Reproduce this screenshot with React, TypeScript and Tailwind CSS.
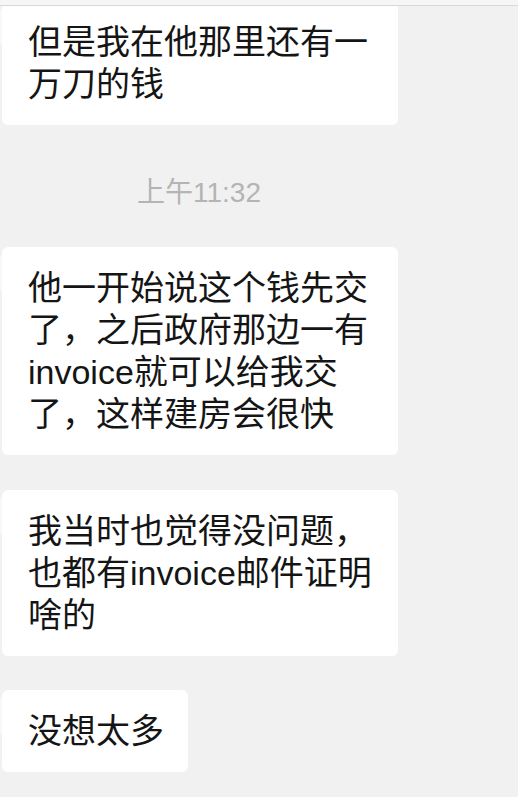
const font = { fontFamily: '"Liberation Sans", "Noto Sans CJK SC", sans-serif' }

type Message = { id: number; text: string }

const Bubble = ({ text, className }: { text: string; className: string }) => {
  return (
    <div className={`relative ml-[2px] w-fit max-w-[396px] rounded-[6px] bg-white pt-[20px] pb-[20px] pl-[26px] pr-[24px] ${className}`}>
      <div className="absolute -left-[2px] top-[8px] h-[36px] w-[2px] rounded-l-sm bg-[#f8f8f8]" />
      <p className="text-[34px] leading-[42px] text-[#151515]" style={font}>
        {text}
      </p>
    </div>
  )
}

export default function App() {
  const messages: Message[] = [
    { id: 2, text: '他一开始说这个钱先交了，之后政府那边一有invoice就可以给我交了，这样建房会很快' },
    { id: 3, text: '我当时也觉得没问题，也都有invoice邮件证明啥的' },
    { id: 4, text: '没想太多' },
  ]

  return (
    <div className="relative h-[797px] w-[518px] overflow-hidden bg-[#f1f1f1]">
      {/* top bar edge */}
      <div className="absolute inset-x-0 top-0 z-10 h-[6px] border-b border-[#d9d9d9] bg-[#f6f6f6]" />

      <div className="flex flex-col pt-[1px]">
        <Bubble text="但是我在他那里还有一万刀的钱" className="" />

        <div
          className="mt-[50px] pl-[137px] text-[28px] leading-[36px] text-[#b4b4b4]"
          style={font}
        >
          上午11:32
        </div>

        <Bubble text={messages[0].text} className="mt-[36px]" />
        <Bubble text={messages[1].text} className="mt-[35px]" />
        <Bubble text={messages[2].text} className="mt-[34px]" />
      </div>
    </div>
  )
}
